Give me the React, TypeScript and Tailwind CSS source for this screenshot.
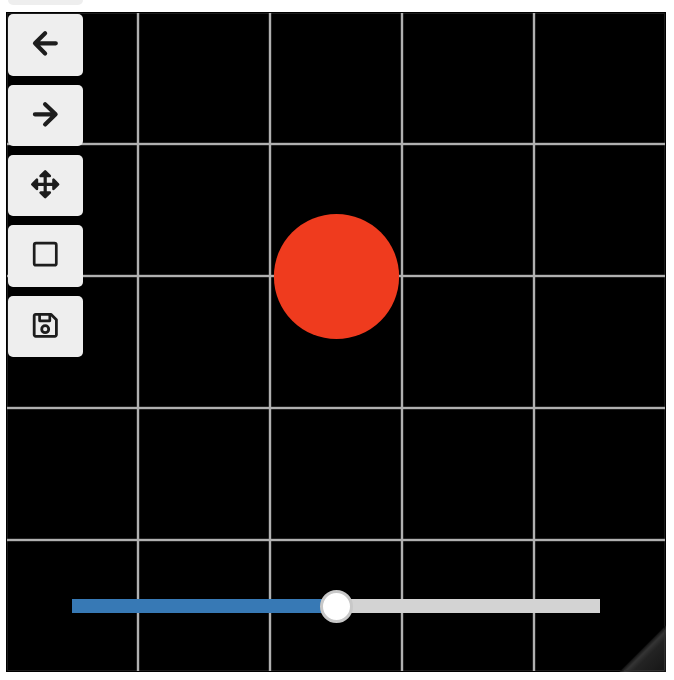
import React from "react";

const tools: { label: string; icon: React.ReactNode }[] = [
  { label: "Home", icon: null },
  { label: "Back", icon: <path d="M13.7 3.9 3.6 14l10.1 10.1M4 14h20.4" strokeWidth="4.2" /> },
  { label: "Forward", icon: <path d="M13.7 3.9 24.2 14 13.7 24.1M3.5 14H24" strokeWidth="4.2" /> },
  {
    label: "Pan",
    icon: (
      <>
        <path d="M13.8 5v18M5 14h18" strokeWidth="3.2" />
        <path
          d="M13.8 1.1 9.2 5.7h9.2ZM13.8 26.9l-4.6-4.6h9.2ZM.9 14l4.6-4.6v9.2ZM26.7 14l-4.6-4.6v9.2Z"
          fill="currentColor"
          strokeWidth="2.6"
        />
      </>
    ),
  },
  {
    label: "Zoom",
    icon: <rect x="2.8" y="2.8" width="22.1" height="22.1" rx="1.8" strokeWidth="2.7" />,
  },
  {
    label: "Save",
    icon: (
      <>
        <path
          d="M4.3 3h15.2L25 8.5v15a1.5 1.5 0 0 1-1.5 1.5H4.3a1.5 1.5 0 0 1-1.5-1.5v-19a1.5 1.5 0 0 1 1.5-1.5Z"
          strokeWidth="2.8"
        />
        <path d="M8.2 3.5v6h10.2v-6" strokeWidth="2.7" />
        <circle cx="13.8" cy="17.9" r="3.5" strokeWidth="2.8" />
      </>
    ),
  },
];

const gridLines = [132, 264, 396, 528];

function Plot() {
  return (
    <svg width="660" height="660" viewBox="0 0 660 660" className="block">
      <defs>
        <linearGradient id="corner" gradientUnits="userSpaceOnUse" x1="636" y1="636" x2="660" y2="660">
          <stop offset="0" stopColor="#000" />
          <stop offset="0.06" stopColor="#1c1c1c" />
          <stop offset="0.14" stopColor="#343434" />
          <stop offset="0.3" stopColor="#232323" />
          <stop offset="1" stopColor="#151515" />
        </linearGradient>
      </defs>
      <rect width="660" height="660" fill="#000" />
      {gridLines.map((p) => (
        <g key={p} fill="#b0b0b0">
          <rect x={p - 1.2} y="1" width="2.4" height="658" />
          <rect x="1" y={p - 1.2} width="658" height="2.4" />
        </g>
      ))}
      <rect x="1.5" y="1.5" width="657" height="657" fill="none" stroke="#b0b0b0" strokeOpacity="0.16" />
      <circle cx="330.5" cy="264.5" r="62.6" fill="#ef3b1e" />
      <path d="M660 613V660H613Z" fill="url(#corner)" />
      <path d="M658.5 618V658.5H618" fill="none" stroke="#303030" />
    </svg>
  );
}

export default function App() {
  return (
    <main className="relative h-[680px] w-[674px] overflow-hidden bg-white pl-[6px] pt-[12px]">
      <Plot />
      <nav className="absolute left-[8px] top-[-56.2px] flex w-[75px] flex-col gap-[9px]">
        {tools.map(({ label, icon }) => (
          <button
            key={label}
            aria-label={label}
            className="flex h-[61.35px] items-center justify-center rounded-[5px] bg-[#eee] pb-[3px] pr-px text-[#1d1d1d]"
          >
            {icon && (
              <svg
                width="28"
                height="28"
                viewBox="-0.4 -0.3 28 28"
                fill="none"
                stroke="currentColor"
                strokeLinecap="round"
                strokeLinejoin="round"
                className="overflow-visible"
              >
                {icon}
              </svg>
            )}
          </button>
        ))}
      </nav>
      <div className="absolute left-[72px] top-[599px] flex h-[14px] w-[528px] items-center bg-[#d3d3d3]">
        <div className="h-full w-[264px] bg-[#3779b5]" />
        <div className="-ml-[16px] size-[33px] shrink-0 rounded-full border-[3px] border-[#c8c8c8] bg-white" />
      </div>
    </main>
  );
}
